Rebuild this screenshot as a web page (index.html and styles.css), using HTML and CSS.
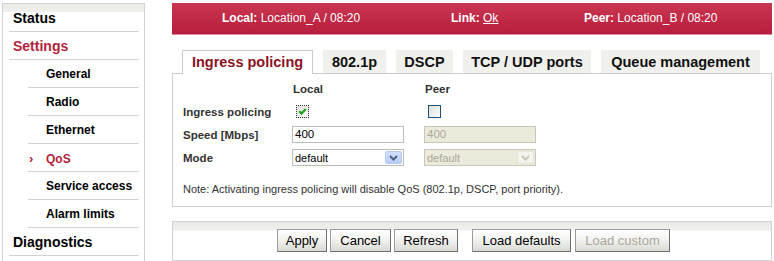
FILE: index.html
```html
<!DOCTYPE html>
<html lang="en">
<head>
    <meta charset="UTF-8">
    <title>Settings - QoS</title>
    <link rel="stylesheet" href="styles.css">
</head>
<body>
    <div class="page">
        <nav class="sidebar">
            <a class="nav-item nav-top" href="#">Status</a>
            <a class="nav-item nav-top nav-active" href="#">Settings</a>
            <a class="nav-item nav-sub" href="#">General</a>
            <a class="nav-item nav-sub" href="#">Radio</a>
            <a class="nav-item nav-sub" href="#">Ethernet</a>
            <a class="nav-item nav-sub nav-active nav-current" href="#">QoS</a>
            <a class="nav-item nav-sub" href="#">Service access</a>
            <a class="nav-item nav-sub" href="#">Alarm limits</a>
            <a class="nav-item nav-top" href="#">Diagnostics</a>
        </nav>
        <main class="main">
            <div class="statusbar">
                <span class="status-item status-local"><b>Local:</b> Location_A / 08:20</span>
                <span class="status-item status-link"><b>Link:</b> <u>Ok</u></span>
                <span class="status-item"><b>Peer:</b> Location_B / 08:20</span>
            </div>

            <div class="tabs">
                <div class="tab tab-active tab-ingress">Ingress policing</div>
                <div class="tab tab-8021p">802.1p</div>
                <div class="tab tab-dscp">DSCP</div>
                <div class="tab tab-ports">TCP / UDP ports</div>
                <div class="tab tab-queue">Queue management</div>
            </div>

            <div class="panel">
                <div class="form">
                    <span></span>
                    <span class="col-head">Local</span>
                    <span class="col-head">Peer</span>

                    <span>Ingress policing</span>
                    <span class="check check-focus">
                        <svg width="11" height="11" viewBox="0 0 11 11"><path d="M2.3 5.2 L4.5 7.6 L8.8 3" fill="none" stroke="#21a121" stroke-width="2.2"/></svg>
                    </span>
                    <span class="check"></span>

                    <span>Speed [Mbps]</span>
                    <span class="field">400</span>
                    <span class="field field-disabled">400</span>

                    <span>Mode</span>
                    <span class="select">
                        <span class="select-value">default</span>
                        <span class="select-arrow">
                            <svg width="9" height="6" viewBox="0 0 9 6"><path d="M1 1 L4.5 4.5 L8 1" fill="none" stroke="#4d6185" stroke-width="2"/></svg>
                        </span>
                    </span>
                    <span class="select select-disabled">
                        <span class="select-value">default</span>
                        <span class="select-arrow">
                            <svg width="9" height="6" viewBox="0 0 9 6"><path d="M1 1 L4.5 4.5 L8 1" fill="none" stroke="#c9c7ba" stroke-width="2"/></svg>
                        </span>
                    </span>
                </div>
                <p class="note">Note: Activating ingress policing will disable QoS (802.1p, DSCP, port priority).</p>
            </div>

            <div class="actions">
                <div class="btn-group">
                    <button class="btn btn-apply">Apply</button>
                    <button class="btn btn-cancel">Cancel</button>
                    <button class="btn btn-refresh">Refresh</button>
                </div>
                <div class="btn-group">
                    <button class="btn btn-defaults">Load defaults</button>
                    <button class="btn btn-custom" disabled>Load custom</button>
                </div>
            </div>
        </main>
    </div>
</body>
</html>
```

FILE: styles.css
```css
body {
    margin: 0;
    font-family: "Liberation Sans", Arial, sans-serif;
    background-color: #fff;
    overflow: hidden;
}

.page {
    display: flex;
    align-items: flex-start;
    padding: 3px 0 0 2px;
}

/* left menu */
.sidebar {
    display: flex;
    flex-direction: column;
    width: 143px;
    height: 270px;
    box-sizing: border-box;
    border: 1px solid #d4d4d4;
    background: linear-gradient(#ebebe8 0, #efefec 8px, #fff 8px);
}

.nav-item {
    display: block;
    height: 26px;
    padding-top: 1px;
    line-height: 27px;
    border-bottom: 1px solid #d3d3d3;
    color: #000;
    font-weight: bold;
    text-decoration: none;
    white-space: nowrap;
}

.nav-top {
    margin: 0 5px 0 6px;
    padding-left: 4px;
    font-size: 14px;
}

.nav-sub {
    margin: 0 5px 0 25px;
    padding-left: 18px;
    font-size: 12px;
}

.nav-active {
    color: #b21f3a;
}

.nav-current::before {
    content: "\203A";
    display: inline-block;
    width: 17px;
    margin-left: -17px;
    font-size: 13px;
}

/* main column */
.main {
    width: 600px;
    margin-left: 27px;
}

.statusbar {
    display: flex;
    height: 31px;
    padding-left: 50px;
    border-bottom: 1px solid #dc8c9c;
    background: linear-gradient(#ca3751, #b81d3d);
    color: #fff;
    font-size: 12px;
    line-height: 31px;
}

.status-local {
    width: 229px;
}

.status-link {
    width: 133px;
}

.tabs {
    display: flex;
    gap: 10px;
    height: 23px;
    margin: 15px 0 0 10px;
}

.tab {
    box-sizing: border-box;
    height: 23px;
    line-height: 24px;
    text-align: center;
    font-size: 14.5px;
    font-weight: bold;
    color: #111;
    background-color: #f0f0ec;
}

.tab-active {
    position: relative;
    height: 24px;
    line-height: 23px;
    border: 1px solid #c8c8c8;
    border-bottom: none;
    background-color: #fff;
    color: #8c1222;
}

.tab-ingress { width: 131px; }
.tab-8021p { width: 63px; }
.tab-dscp { width: 57px; }
.tab-ports { width: 128px; }
.tab-queue { width: 159px; }

.panel {
    border: 1px solid #cdcdcd;
    padding: 4px 0 10px 10px;
}

.form {
    display: grid;
    grid-template-columns: 109px 132px 112px;
    grid-template-rows: 22px 23px 23px 23px;
    align-items: center;
    font-size: 11.5px;
    font-weight: bold;
    color: #333;
}

.col-head {
    padding-left: 1px;
}

.check {
    display: flex;
    align-items: center;
    justify-content: center;
    box-sizing: border-box;
    width: 13px;
    height: 13px;
    margin-left: 4px;
    border: 1px solid #1c5180;
    background: linear-gradient(135deg, #dcdcd6, #fff);
}

.check-focus {
    border: 1px dotted #333;
}

.field {
    box-sizing: border-box;
    width: 112px;
    height: 17px;
    padding-left: 2px;
    line-height: 15px;
    border: 1px solid #bdbdbd;
    font-size: 11.5px;
    font-weight: normal;
    color: #000;
}

.field-disabled {
    background-color: #ebeadb;
    border-color: #c9c7ba;
    color: #aca899;
}

.select {
    display: flex;
    align-items: center;
    justify-content: space-between;
    box-sizing: border-box;
    width: 112px;
    height: 17px;
    padding: 0 1px 0 2px;
    border: 1px solid #bdbdbd;
    font-size: 11px;
    font-weight: normal;
    color: #000;
}

.select-arrow {
    display: flex;
    align-items: center;
    justify-content: center;
    box-sizing: border-box;
    width: 17px;
    height: 13px;
    border: 1px solid #b7c9f5;
    border-radius: 2px;
    background: linear-gradient(#d2defc, #b9cdfb);
}

.select-disabled {
    background-color: #ebeadb;
    border-color: #c9c7ba;
    color: #aca899;
}

.select-disabled .select-arrow {
    border-color: #e4e3dc;
    background: #f4f3ee;
}

.note {
    margin: 14px 0 0;
    font-size: 11px;
    line-height: 13px;
    color: #333;
}

/* button bar */
.actions {
    display: flex;
    align-items: flex-start;
    gap: 14px;
    box-sizing: border-box;
    height: 40px;
    margin-top: 14px;
    padding: 7px 0 0 104px;
    border: 1px solid #d2d2d2;
    background: linear-gradient(#e9e9e5 0, #f0f0ed 8px, #fff 9px);
}

.btn-group {
    display: flex;
    gap: 3px;
}

.btn-group + .btn-group {
    gap: 4px;
}

.btn {
    height: 23px;
    padding: 0;
    border: 1px solid #9c9c9c;
    border-right-color: #707070;
    border-bottom-color: #707070;
    border-radius: 0;
    background: linear-gradient(#fff, #f3f3f1 45%, #d9d9d5);
    font-family: "Liberation Sans", Arial, sans-serif;
    font-size: 13px;
    color: #000;
}

.btn-apply { width: 50px; }
.btn-cancel { width: 61px; }
.btn-refresh { width: 64px; }
.btn-defaults { width: 99px; }
.btn-custom { width: 95px; }

.btn:disabled {
    color: #aca899;
}
```
